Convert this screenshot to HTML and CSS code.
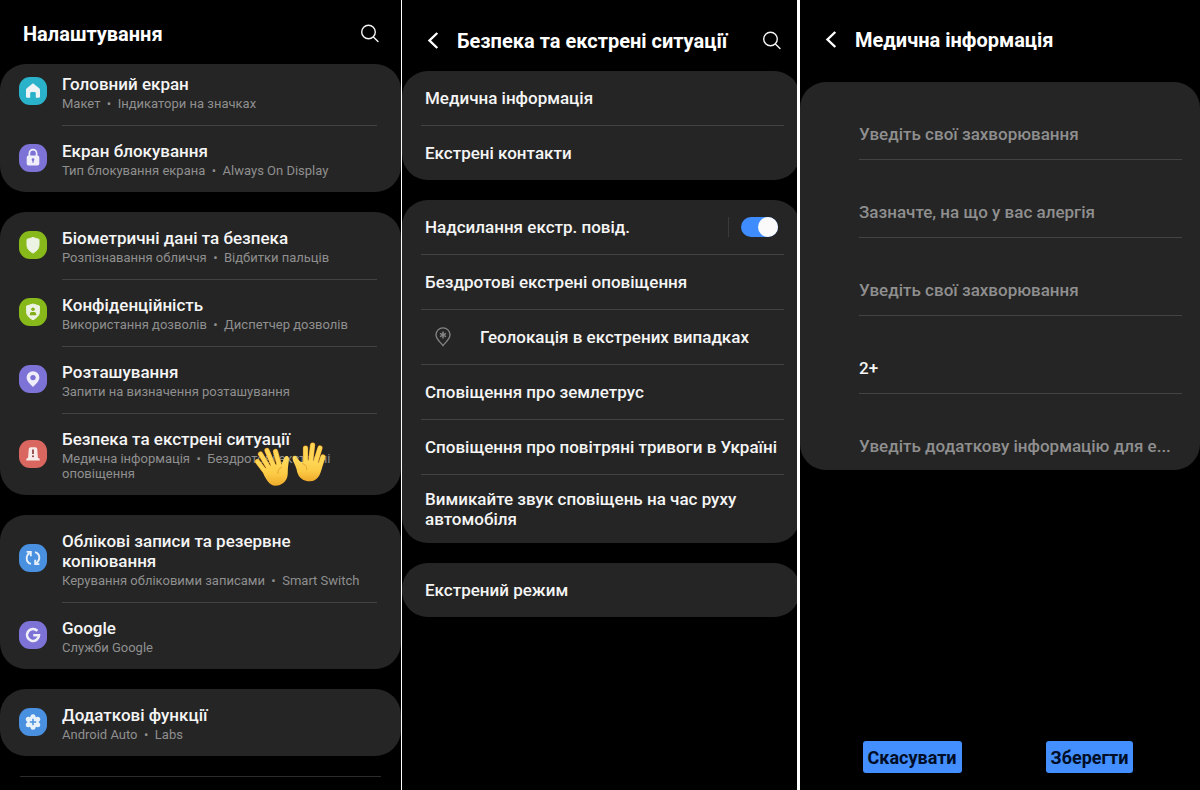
FILE: index.html
```html
<!DOCTYPE html>
<html lang="uk">
<head>
    <meta charset="UTF-8">
    <meta name="viewport" content="width=device-width, initial-scale=1.0">
    <title>Налаштування</title>
    <link rel="stylesheet" href="styles.css">
</head>
<body>
    <div class="screens">

        <!-- Settings list -->
        <section class="screen screen-settings">
            <header class="header">
                <h1>Налаштування</h1>
                <button class="icon-btn" aria-label="Пошук">
                    <svg width="20" height="20" viewBox="0 0 20 20" fill="none" stroke="#f5f5f5" stroke-width="1.4" stroke-linecap="round"><circle cx="8.5" cy="8" r="6.8"/><path d="M13.4 12.9L18 17.5"/></svg>
                </button>
            </header>

            <nav class="card card-scrolled">
                <a href="#" class="item">
                    <span class="icon cyan">
                        <svg viewBox="0 0 28 28"><path d="M14 6.2L20.2 11.2Q21 11.9 21 13V19.4Q21 20.8 19.6 20.8H16.8V16.3Q16.8 14.9 15.4 14.9H12.6Q11.2 14.9 11.2 16.3V20.8H8.4Q7 20.8 7 19.4V13Q7 11.9 7.8 11.2Z" fill="#eef4f5"/></svg>
                    </span>
                    <span class="text">
                        <span class="title">Головний екран</span>
                        <span class="sub">Макет &nbsp;•&nbsp; Індикатори на значках</span>
                    </span>
                </a>
                <a href="#" class="item">
                    <span class="icon purple">
                        <svg viewBox="0 0 28 28"><path d="M10.4 12V9.2a3.6 3.6 0 0 1 7.2 0V12" fill="none" stroke="#efeefa" stroke-width="1.7"/><rect x="7.7" y="11.6" width="12.6" height="10" rx="1.8" fill="#efeefa"/><circle cx="14" cy="15.6" r="1.3" fill="#7a70d2"/><path d="M14 15.6V18.8" stroke="#7a70d2" stroke-width="1.2"/></svg>
                    </span>
                    <span class="text">
                        <span class="title">Екран блокування</span>
                        <span class="sub">Тип блокування екрана &nbsp;•&nbsp; Always On Display</span>
                    </span>
                </a>
            </nav>

            <nav class="card">
                <a href="#" class="item">
                    <span class="icon green">
                        <svg viewBox="0 0 28 28"><path d="M14 6.5L20 8.4V14C20 17.6 17.5 20.3 14 22C10.5 20.3 8 17.6 8 14V8.4Z" fill="#edf3e2" stroke="#edf3e2" stroke-linejoin="round"/></svg>
                    </span>
                    <span class="text">
                        <span class="title">Біометричні дані та безпека</span>
                        <span class="sub">Розпізнавання обличчя &nbsp;•&nbsp; Відбитки пальців</span>
                    </span>
                </a>
                <a href="#" class="item">
                    <span class="icon green">
                        <svg viewBox="0 0 28 28"><path d="M14 6L20.4 8V13.6C20.4 17.4 17.8 20 14 21.8C10.2 20 7.6 17.4 7.6 13.6V8Z" fill="#edf3e2" stroke="#edf3e2" stroke-linejoin="round"/><circle cx="14" cy="11.3" r="1.8" fill="#83ae18"/><path d="M10.8 17.3V16Q10.8 14 12.8 14H15.2Q17.2 14 17.2 16V17.3Z" fill="#83ae18"/></svg>
                    </span>
                    <span class="text">
                        <span class="title">Конфіденційність</span>
                        <span class="sub">Використання дозволів &nbsp;•&nbsp; Диспетчер дозволів</span>
                    </span>
                </a>
                <a href="#" class="item">
                    <span class="icon purple">
                        <svg viewBox="0 0 28 28"><path fill-rule="evenodd" d="M14 6.2A6.4 6.4 0 0 0 7.6 12.6C7.6 16.2 11 18.9 14 22C17 18.9 20.4 16.2 20.4 12.6A6.4 6.4 0 0 0 14 6.2ZM14 9.9A2.7 2.7 0 1 1 14 15.3A2.7 2.7 0 1 1 14 9.9Z" fill="#efeefa"/></svg>
                    </span>
                    <span class="text">
                        <span class="title">Розташування</span>
                        <span class="sub">Запити на визначення розташування</span>
                    </span>
                </a>
                <a href="#" class="item">
                    <span class="icon red">
                        <svg viewBox="0 0 28 28"><path d="M9.1 17.8L9.8 8.8Q10 7.2 11.6 7.2H16.4Q18 7.2 18.2 8.8L18.9 17.8Q20.9 18 20.9 20.4H7.1Q7.1 18 9.1 17.8Z" fill="#f8ecea"/><path d="M14 9.4V14" stroke="#8a3d38" stroke-width="1.7"/><circle cx="14" cy="16.2" r="1" fill="#8a3d38"/></svg>
                    </span>
                    <span class="text">
                        <span class="title">Безпека та екстрені ситуації</span>
                        <span class="sub">Медична інформація &nbsp;•&nbsp; Бездротові екстрені оповіщення</span>
                    </span>
                    <!-- Waving hands -->
                    <svg class="hands" width="74" height="48" viewBox="0 0 74 48" aria-hidden="true">
                        <defs>
                            <linearGradient id="skin" x1="0" y1="0" x2="0" y2="1">
                                <stop offset="0" stop-color="#ffdc5e"/>
                                <stop offset="0.6" stop-color="#fccb45"/>
                                <stop offset="1" stop-color="#eea92b"/>
                            </linearGradient>
                        </defs>
                        <g stroke-linecap="round" fill="none">
                            <g stroke="#dd9627" stroke-width="5.2">
                                <path d="M4.4 21.5L14 34"/><path d="M7.5 14L17 30"/><path d="M14 10.5L21 27"/><path d="M22.5 11.5L27 28"/>
                            </g>
                            <g stroke="#ffd654" stroke-width="4.2">
                                <path d="M4.4 21.5L14 34"/><path d="M7.5 14L17 30"/><path d="M14 10.5L21 27"/><path d="M22.5 11.5L27 28"/>
                            </g>
                        </g>
                        <path d="M11 30C14 26 22 23 28 25.5C29.5 23 30 20 31.5 17.5C33 15 36 16 36 19C35.7 23 34.8 27 34.8 31C34.8 36 34.5 40 29.5 43.5C24 47 18 46.5 14.5 41C12 37 9 33 11 30Z" fill="url(#skin)"/>
                        <path d="M29 27C26 28 24.5 31 25 34" fill="none" stroke="#e2a033" stroke-width="0.9"/>
                        <g stroke-linecap="round" fill="none">
                            <g stroke="#dd9627" stroke-width="5.2">
                                <path d="M70 17L66 29"/><path d="M67 8L62 24"/><path d="M59.6 5L57.5 23"/><path d="M52.5 8L52.5 24"/>
                            </g>
                            <g stroke="#ffd654" stroke-width="4.2">
                                <path d="M70 17L66 29"/><path d="M67 8L62 24"/><path d="M59.6 5L57.5 23"/><path d="M52.5 8L52.5 24"/>
                            </g>
                        </g>
                        <path d="M50 22C55 19.5 64 20 68.5 25C69 30 67.5 33 66 36C63 41 58 42.5 52 40.5C46 38.5 44.5 34 43.5 29C42.5 25 40 22 39.5 18.5C39.3 15.5 42.5 14.8 44 17.5C46 20.5 47 22.5 50 22Z" fill="url(#skin)"/>
                        <path d="M49 23.5C52 24 54 26.5 53.8 30" fill="none" stroke="#e2a033" stroke-width="0.9"/>
                    </svg>
                </a>
            </nav>

            <nav class="card">
                <a href="#" class="item">
                    <span class="icon blue">
                        <svg viewBox="0 0 28 28" fill="none" stroke="#e8f1fa" stroke-width="1.9"><path d="M12 19.9C9.3 19.2 7.7 16.8 7.7 14.2C7.7 12 8.8 10.2 10.6 8.8"/><path d="M7.6 7.9H11.8V12.3"/><path d="M16 8.1C18.7 8.8 20.3 11.2 20.3 13.8C20.3 16 19.2 17.8 17.4 19.2"/><path d="M20.4 20.1H16.2V15.7"/></svg>
                    </span>
                    <span class="text">
                        <span class="title">Облікові записи та резервне копіювання</span>
                        <span class="sub">Керування обліковими записами &nbsp;•&nbsp; Smart Switch</span>
                    </span>
                </a>
                <a href="#" class="item">
                    <span class="icon purple">
                        <svg viewBox="0 0 28 28"><path d="M18.4 9.9A6 6 0 1 0 20 14.2H14.2" fill="none" stroke="#efeefa" stroke-width="2.6"/></svg>
                    </span>
                    <span class="text">
                        <span class="title">Google</span>
                        <span class="sub">Служби Google</span>
                    </span>
                </a>
            </nav>

            <nav class="card">
                <a href="#" class="item">
                    <span class="icon blue">
                        <svg viewBox="0 0 28 28"><g fill="#e8f1fa"><circle cx="14" cy="14" r="5.8"/><circle cx="14" cy="8.7" r="2.5"/><circle cx="14" cy="19.3" r="2.5"/><circle cx="9.3" cy="11.3" r="2.5"/><circle cx="18.7" cy="11.3" r="2.5"/><circle cx="9.3" cy="16.7" r="2.5"/><circle cx="18.7" cy="16.7" r="2.5"/></g><path d="M14 10.8V17.2M10.8 14H17.2" stroke="#4a90e0" stroke-width="1.5"/></svg>
                    </span>
                    <span class="text">
                        <span class="title">Додаткові функції</span>
                        <span class="sub">Android Auto &nbsp;•&nbsp; Labs</span>
                    </span>
                </a>
            </nav>
            <hr class="next">
        </section>

        <!-- Safety and emergency -->
        <section class="screen screen-safety">
            <header class="header">
                <button class="icon-btn back" aria-label="Назад">
                    <svg width="12" height="18" viewBox="0 0 12 18" fill="none" stroke="#fff" stroke-width="2.4"><path d="M10.3 1L2.5 8.5L10.3 16"/></svg>
                </button>
                <h1>Безпека та екстрені ситуації</h1>
                <button class="icon-btn" aria-label="Пошук">
                    <svg width="20" height="20" viewBox="0 0 20 20" fill="none" stroke="#f5f5f5" stroke-width="1.4" stroke-linecap="round"><circle cx="8.5" cy="8" r="6.8"/><path d="M13.4 12.9L18 17.5"/></svg>
                </button>
            </header>

            <nav class="card">
                <a href="#" class="row">Медична інформація</a>
                <a href="#" class="row">Екстрені контакти</a>
            </nav>

            <div class="card">
                <div class="row">
                    <label for="sos">Надсилання екстр. повід.</label>
                    <span class="switch-box"><input type="checkbox" id="sos" class="switch" checked></span>
                </div>
                <a href="#" class="row">Бездротові екстрені оповіщення</a>
                <a href="#" class="row row-geo">
                    <svg width="18" height="22" viewBox="0 0 18 22" fill="none" stroke="#858585" stroke-width="1.3"><path d="M9 1.8A7 7 0 0 0 2 8.8C2 13.2 6 15.6 9 19.6C12 15.6 16 13.2 16 8.8A7 7 0 0 0 9 1.8Z"/><path d="M9 5.6V12.4M6 7.3L12 10.7M12 7.3L6 10.7" stroke-width="1.5"/></svg>
                    Геолокація в екстрених випадках
                </a>
                <a href="#" class="row">Сповіщення про землетрус</a>
                <a href="#" class="row">Сповіщення про повітряні тривоги в Україні</a>
                <a href="#" class="row row-tall">Вимикайте звук сповіщень на час руху автомобіля</a>
            </div>

            <nav class="card">
                <a href="#" class="row">Екстрений режим</a>
            </nav>
        </section>

        <!-- Medical info form -->
        <form class="screen screen-medical">
            <header class="header">
                <button type="button" class="icon-btn back" aria-label="Назад">
                    <svg width="12" height="18" viewBox="0 0 12 18" fill="none" stroke="#fff" stroke-width="2.4"><path d="M10.3 1L2.5 8.5L10.3 16"/></svg>
                </button>
                <h1>Медична інформація</h1>
            </header>

            <div class="card fields">
                <input type="text" aria-label="Захворювання" placeholder="Уведіть свої захворювання">
                <input type="text" aria-label="Алергія" placeholder="Зазначте, на що у вас алергія">
                <input type="text" aria-label="Інші захворювання" placeholder="Уведіть свої захворювання">
                <input type="text" aria-label="Група крові" value="2+">
                <input type="text" aria-label="Додаткова інформація" placeholder="Уведіть додаткову інформацію для е...">
            </div>

            <footer class="actions">
                <button type="reset">Скасувати</button>
                <button type="submit">Зберегти</button>
            </footer>
        </form>

    </div>
</body>
</html>
```

FILE: styles.css
```css
* { box-sizing: border-box; }
body { margin: 0; background: #000; color: #f5f5f5; font-family: Roboto, "Liberation Sans", sans-serif; }
a { color: inherit; text-decoration: none; }
button, input { font-family: inherit; }
svg { display: block; }

.screens { display: grid; grid-template-columns: 402fr 398fr 400fr; min-height: 100vh; }
.screen { display: flex; flex-direction: column; min-width: 0; overflow: hidden; }
.screen-settings { border-right: 1px solid #fff; }
.screen-safety { border-right: 3px solid #fff; }

/* Header */
.header { display: flex; align-items: center; padding: 22px 21px 18px 23px; }
.header h1 { flex: 1; margin: 0; font-size: 20px; line-height: 24px; font-weight: 700; color: #fff; white-space: nowrap; }
.screen-safety .header { padding: 29px 15px 18px 25px; }
.screen-medical .header { padding: 28px 15px 30px 25px; }
.icon-btn { padding: 0; border: none; background: none; cursor: pointer; }
.back { margin-right: 18px; }

/* Cards */
.card { background: #252525; border-radius: 26px; margin-bottom: 20px; overflow: hidden; }
.card-scrolled .item:first-child { margin-top: -6px; }
.screen-safety .card { margin-right: -3px; padding: 0 16px 0 19px; }

/* Settings items */
.item { position: relative; display: flex; align-items: center; padding-left: 19px; padding-right: 24px; }
.icon { flex: none; width: 28px; height: 28px; margin: 0 15px 1px 0; border-radius: 11px; }
.cyan { background: #2bb2cb; }
.purple { background: #7d73d6; }
.green { background: #88b91a; }
.red { background: #d9675f; }
.blue { background: #4a90e0; }
.text { flex: 1; padding: 15px 0 14px; border-top: 1px solid #434343; }
.item:first-child .text { border-top-color: transparent; }
.title { display: block; font-size: 17px; line-height: 20px; font-weight: 500; }
.sub { display: block; margin-top: 2px; font-size: 13px; line-height: 15px; color: #8f8f8f; }
.hands { position: absolute; left: 253px; top: 27px; }
.next { width: calc(100% - 40px); margin: 0 20px; border: none; border-top: 1px solid #2c2c2c; }

/* Safety rows */
.row { display: flex; align-items: center; padding: 17px 4px; border-bottom: 1px solid #434343; font-size: 17px; line-height: 20px; font-weight: 500; }
.row:last-child { border-bottom: none; }
.row label { flex: 1; }
.row-geo { gap: 28px; padding: 16px 13px; line-height: 22px; }
.row-tall { padding: 14px 4px; }
.switch-box { padding-left: 12px; padding-right: 2px; border-left: 1px solid #3a3a3a; }
.switch { appearance: none; display: block; width: 37px; height: 20px; margin: 0; border-radius: 10px; background: #666; cursor: pointer; }
.switch::before { content: ""; display: block; width: 20px; height: 20px; border-radius: 50%; background: #fafafa; }
.switch:checked { background: #3f8cff; }
.switch:checked::before { margin-left: auto; }

/* Medical form */
.fields { display: flex; flex-direction: column; gap: 27px; padding: 27px 18px 0 59px; }
.fields input { width: 100%; height: 51px; padding: 0; border: none; border-bottom: 1px solid #434343; border-radius: 0; background: none; color: #f5f5f5; font-size: 17px; font-weight: 500; outline: none; text-overflow: ellipsis; }
.fields input:last-child { height: 49px; border-bottom: none; }
.fields input::placeholder { color: #8f8f8f; }
.actions { display: flex; justify-content: center; gap: 84px; margin-top: auto; padding: 0 4px 17px 0; }
.actions button { height: 32px; padding: 0 5px; border: none; border-radius: 3px; background: #438fff; color: #000d26; font-size: 18px; font-weight: 700; cursor: pointer; }
```
